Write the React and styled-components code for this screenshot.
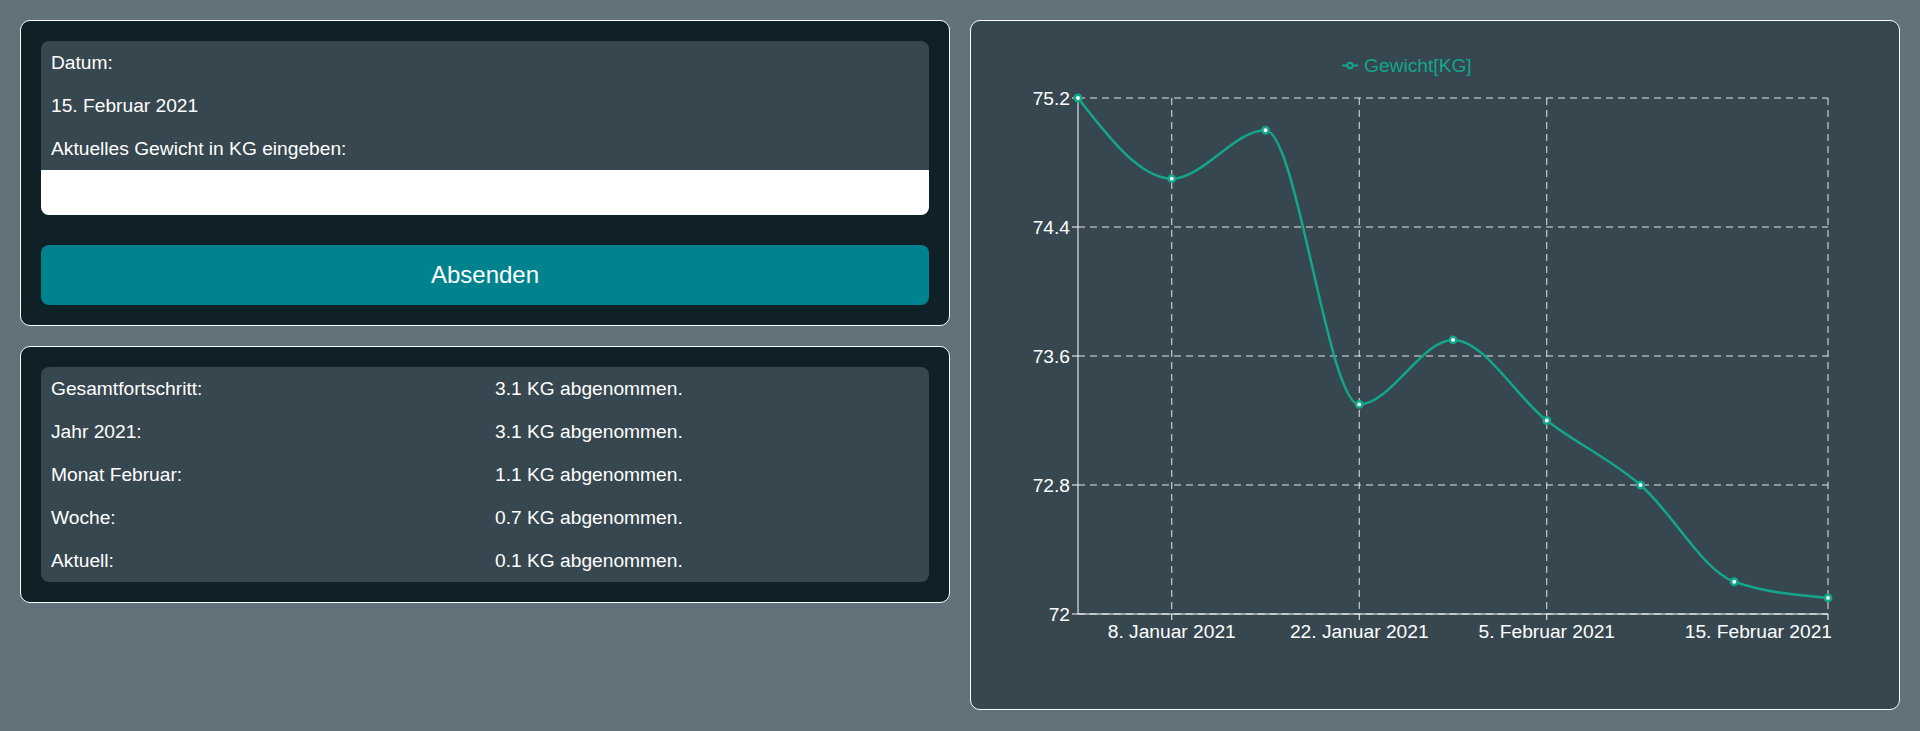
import { Fragment } from "react";
import styled, { createGlobalStyle } from "styled-components";

const GlobalStyle = createGlobalStyle`
  body {
    margin: 0;
    background: #62727b;
    font-family: "Liberation Sans", Arial, sans-serif;
    color: #fff;
  }
  * {
    box-sizing: border-box;
  }
`;

const Page = styled.main`
  display: grid;
  grid-template-columns: 1fr 1fr;
  gap: 20px;
  padding: 20px;
  align-items: start;
`;

const Column = styled.div`
  display: flex;
  flex-direction: column;
  gap: 20px;
`;

const Card = styled.section`
  background: #102027;
  border: 1px solid #fff;
  border-radius: 10px;
  padding: 20px;
`;

const Panel = styled.div`
  background: #37474f;
  border-radius: 8px;
  overflow: hidden;
`;

const FieldRow = styled.div`
  height: 43px;
  display: flex;
  align-items: center;
  padding: 0 10px;
  font-size: 19.2px;
`;

const WeightInput = styled.input`
  display: block;
  width: 100%;
  height: 45px;
  border: none;
  outline: none;
  background: #fff;
  font-size: 19.2px;
  padding: 0 10px;
`;

const SubmitButton = styled.button`
  display: block;
  width: 100%;
  height: 60px;
  margin-top: 30px;
  border: none;
  border-radius: 8px;
  background: #00838f;
  color: #fff;
  font-family: inherit;
  font-size: 24px;
  cursor: pointer;
`;

const StatGrid = styled.div`
  display: grid;
  grid-template-columns: 1fr 1fr;
`;

const StatCell = styled.div`
  height: 43px;
  display: flex;
  align-items: center;
  padding: 0 10px;
  font-size: 19.2px;
`;

const ChartCard = styled.section`
  background: #37474f;
  border: 1px solid #fff;
  border-radius: 10px;
  height: 690px;
  overflow: hidden;
`;

const ChartSvg = styled.svg`
  display: block;
  width: 100%;
  height: 688px;
  font-family: "Liberation Sans", Arial, sans-serif;
  font-size: 19.2px;
`;

const TickText = styled.text`
  fill: #fff;
`;

const LegendText = styled.text`
  fill: #13a68b;
`;

const LINE = "#13a68b";

const stats = [
  ["Gesamtfortschritt:", "3.1 KG abgenommen."],
  ["Jahr 2021:", "3.1 KG abgenommen."],
  ["Monat Februar:", "1.1 KG abgenommen."],
  ["Woche:", "0.7 KG abgenommen."],
  ["Aktuell:", "0.1 KG abgenommen."],
];

const weights = [75.2, 74.7, 75.0, 73.3, 73.7, 73.2, 72.8, 72.2, 72.1];
const yTicks = [72, 72.8, 73.6, 74.4, 75.2];
const xTicks = [
  { i: 1, label: "8. Januar 2021" },
  { i: 3, label: "22. Januar 2021" },
  { i: 5, label: "5. Februar 2021" },
  { i: 8, label: "15. Februar 2021", anchor: "end", shift: 4 },
];

const X0 = 107;
const X1 = 857;
const Y0 = 77;
const Y1 = 593;
const xAt = (i) => X0 + (i * (X1 - X0)) / (weights.length - 1);
const yAt = (v) => Y0 + ((75.2 - v) * (Y1 - Y0)) / 3.2;

// monotone cubic like d3.curveMonotoneX
function monotonePath(pts) {
  const n = pts.length;
  const sign = (v) => (v < 0 ? -1 : 1);
  const m = new Array(n).fill(0);
  for (let i = 1; i < n - 1; i++) {
    const h0 = pts[i].x - pts[i - 1].x;
    const h1 = pts[i + 1].x - pts[i].x;
    const s0 = (pts[i].y - pts[i - 1].y) / h0;
    const s1 = (pts[i + 1].y - pts[i].y) / h1;
    const p = (s0 * h1 + s1 * h0) / (h0 + h1);
    m[i] =
      (sign(s0) + sign(s1)) *
        Math.min(Math.abs(s0), Math.abs(s1), 0.5 * Math.abs(p)) || 0;
  }
  const slope2 = (a, b, t) => ((3 * (b.y - a.y)) / (b.x - a.x) - t) / 2;
  m[0] = slope2(pts[0], pts[1], m[1]);
  m[n - 1] = slope2(pts[n - 2], pts[n - 1], m[n - 2]);
  let d = `M${pts[0].x},${pts[0].y}`;
  for (let i = 0; i < n - 1; i++) {
    const a = pts[i];
    const b = pts[i + 1];
    const dx = (b.x - a.x) / 3;
    d += `C${a.x + dx},${a.y + dx * m[i]} ${b.x - dx},${b.y - dx * m[i + 1]} ${b.x},${b.y}`;
  }
  return d;
}

function WeightChart() {
  const pts = weights.map((v, i) => ({ x: xAt(i), y: yAt(v) }));
  return (
    <ChartSvg viewBox="0 0 928 688">
      <g>
        <line x1="371" y1="44.5" x2="376.3" y2="44.5" stroke={LINE} strokeWidth="2" />
        <circle cx="379" cy="44.5" r="2.7" fill="none" stroke={LINE} strokeWidth="2" />
        <line x1="381.7" y1="44.5" x2="387" y2="44.5" stroke={LINE} strokeWidth="2" />
        <LegendText x="393" y="51">Gewicht[KG]</LegendText>
      </g>

      <g stroke="#e6e6e6" strokeDasharray="7 5" strokeWidth="1">
        {yTicks.map((t) => (
          <line key={t} x1={X0} x2={X1} y1={yAt(t)} y2={yAt(t)} />
        ))}
        {xTicks.map((t) => (
          <line key={t.i} x1={xAt(t.i)} x2={xAt(t.i)} y1={Y0} y2={Y1} />
        ))}
      </g>

      <g stroke="#fff" strokeWidth="1">
        <line x1={X0} x2={X0} y1={Y0} y2={Y1} />
        <line x1={X0} x2={X1} y1={Y1} y2={Y1} />
        {yTicks.map((t) => (
          <line key={t} x1={X0 - 6} x2={X0} y1={yAt(t)} y2={yAt(t)} />
        ))}
        {xTicks.map((t) => (
          <line key={t.i} x1={xAt(t.i)} x2={xAt(t.i)} y1={Y1} y2={Y1 + 6} />
        ))}
      </g>

      {yTicks.map((t) => (
        <TickText key={t} x={X0 - 8} y={yAt(t)} dy="0.355em" textAnchor="end">
          {t}
        </TickText>
      ))}
      {xTicks.map((t) => (
        <TickText
          key={t.i}
          x={xAt(t.i) + (t.shift || 0)}
          y={Y1 + 10}
          dy="0.71em"
          textAnchor={t.anchor || "middle"}
        >
          {t.label}
        </TickText>
      ))}

      <path d={monotonePath(pts)} fill="none" stroke={LINE} strokeWidth="2.5" />
      {pts.map((p, i) => (
        <circle key={i} cx={p.x} cy={p.y} r="3.2" fill="#fff" stroke={LINE} strokeWidth="2.5" />
      ))}
    </ChartSvg>
  );
}

export default function App() {
  return (
    <>
      <GlobalStyle />
      <Page>
        <Column>
          <Card>
            <Panel>
              <FieldRow>Datum:</FieldRow>
              <FieldRow>15. Februar 2021</FieldRow>
              <FieldRow>Aktuelles Gewicht in KG eingeben:</FieldRow>
              <WeightInput type="text" />
            </Panel>
            <SubmitButton>Absenden</SubmitButton>
          </Card>
          <Card>
            <Panel>
              <StatGrid>
                {stats.map(([label, value]) => (
                  <Fragment key={label}>
                    <StatCell>{label}</StatCell>
                    <StatCell>{value}</StatCell>
                  </Fragment>
                ))}
              </StatGrid>
            </Panel>
          </Card>
        </Column>
        <ChartCard>
          <WeightChart />
        </ChartCard>
      </Page>
    </>
  );
}
